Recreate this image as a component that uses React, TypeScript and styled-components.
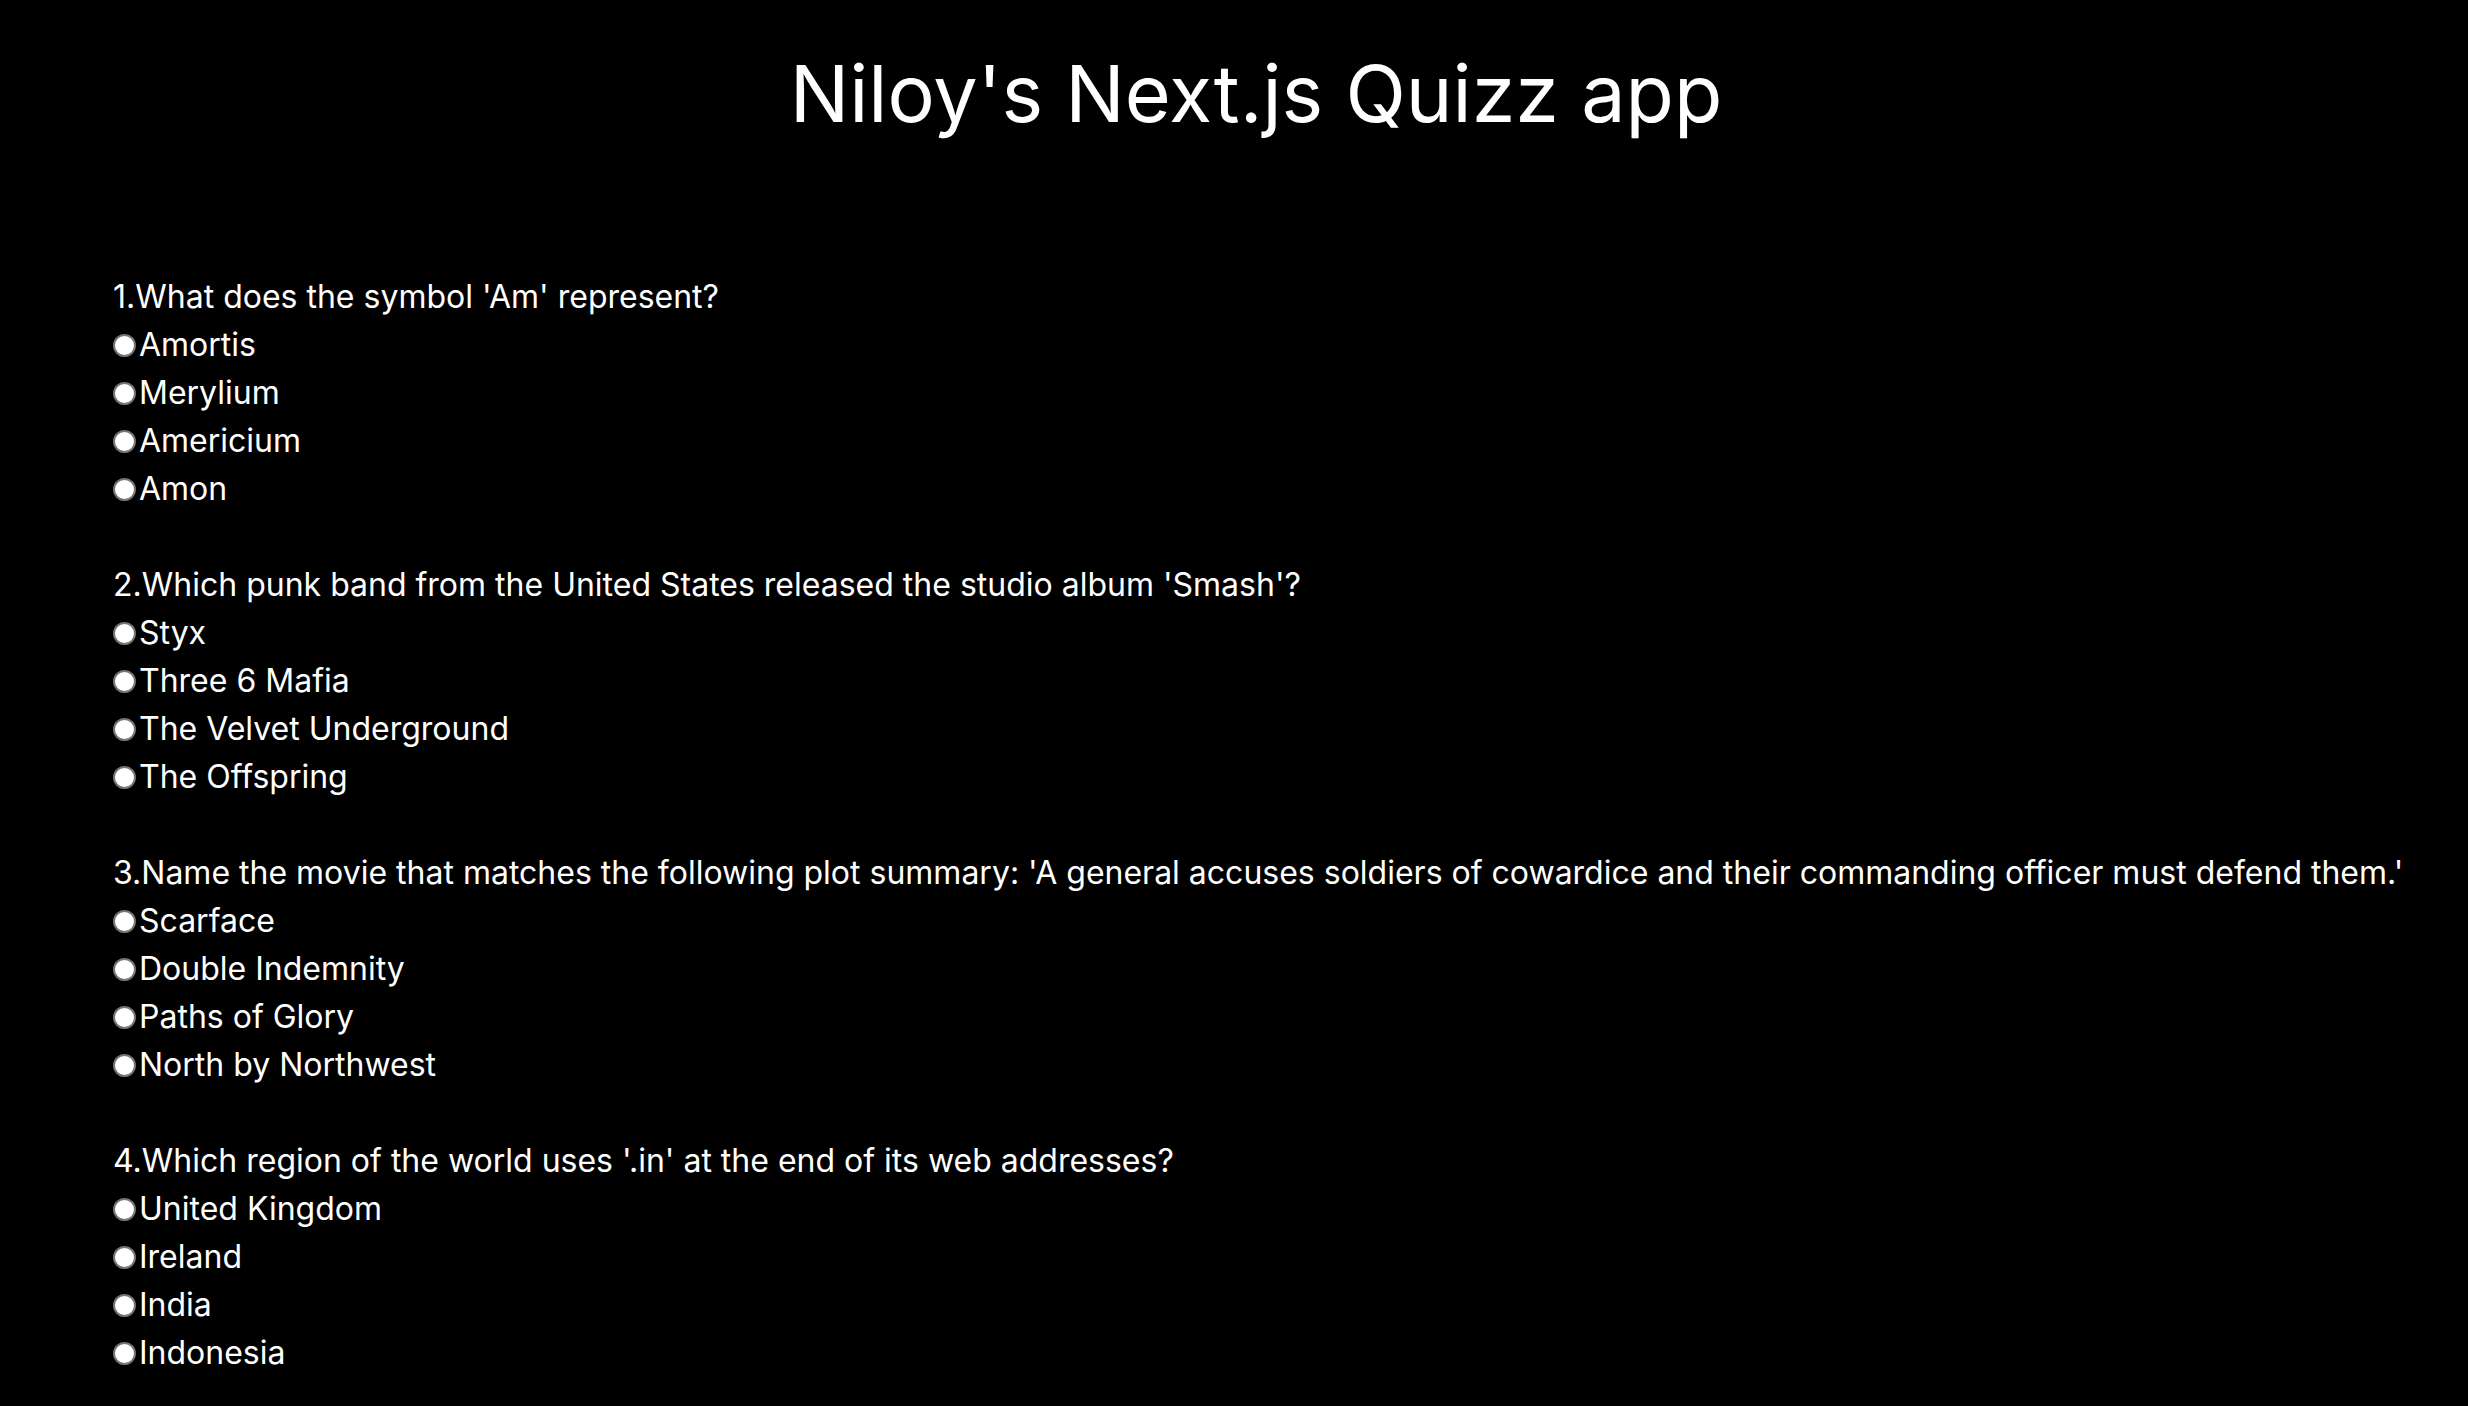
import React from "react";
import styled, { createGlobalStyle } from "styled-components";

const GlobalStyle = createGlobalStyle`
  html, body {
    margin: 0;
    padding: 0;
    background: #000;
    color: #fff;
    font-family: Inter, "Noto Sans", sans-serif;
  }
`;

const Page = styled.main`
  min-height: 1406px;
  background: #000;
  color: #fff;
  display: flex;
  flex-direction: column;
`;

const Title = styled.h1`
  margin: 45px 0 0;
  padding-left: 44px;
  text-align: center;
  font-size: 79px;
  font-weight: 400;
  line-height: 97px;
`;

const QuestionList = styled.div`
  display: flex;
  flex-direction: column;
  gap: 48px;
  margin-top: 131px;
  padding-left: 113px;
`;

const QuestionBlock = styled.section`
  display: flex;
  flex-direction: column;
`;

const QuestionText = styled.p`
  margin: 0;
  font-size: 32px;
  line-height: 48px;
  white-space: nowrap;
`;

const OptionRow = styled.label`
  display: flex;
  align-items: center;
  height: 48px;
  font-size: 32px;
  line-height: 48px;
`;

const Radio = styled.input`
  appearance: none;
  -webkit-appearance: none;
  box-sizing: border-box;
  width: 23px;
  height: 23px;
  margin: 0 3px 0 0;
  flex: none;
  border-radius: 50%;
  background: #fff;
  border: 2px solid #737373;
`;

const questions = [
  {
    q: "What does the symbol 'Am' represent?",
    options: ["Amortis", "Merylium", "Americium", "Amon"],
  },
  {
    q: "Which punk band from the United States released the studio album 'Smash'?",
    options: ["Styx", "Three 6 Mafia", "The Velvet Underground", "The Offspring"],
  },
  {
    q: "Name the movie that matches the following plot summary: 'A general accuses soldiers of cowardice and their commanding officer must defend them.'",
    options: ["Scarface", "Double Indemnity", "Paths of Glory", "North by Northwest"],
  },
  {
    q: "Which region of the world uses '.in' at the end of its web addresses?",
    options: ["United Kingdom", "Ireland", "India", "Indonesia"],
  },
];

export default function App() {
  return (
    <>
      <GlobalStyle />
      <Page>
        <Title>Niloy's Next.js Quizz app</Title>
        <QuestionList>
          {questions.map((item, i) => (
            <QuestionBlock key={i}>
              <QuestionText>
                {i + 1}.{item.q}
              </QuestionText>
              {item.options.map((opt) => (
                <OptionRow key={opt}>
                  <Radio type="radio" name={`q${i}`} value={opt} />
                  {opt}
                </OptionRow>
              ))}
            </QuestionBlock>
          ))}
        </QuestionList>
      </Page>
    </>
  );
}
